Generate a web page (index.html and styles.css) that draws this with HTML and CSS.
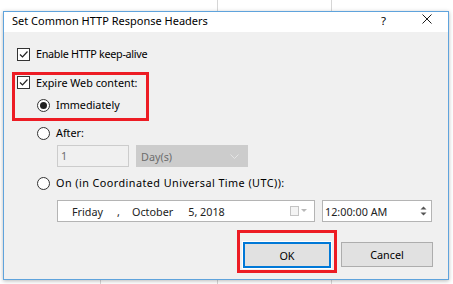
FILE: index.html
```html
<!DOCTYPE html>
<html>
<head>
<meta charset="utf-8">
<link rel="stylesheet" href="styles.css">
</head>
<body>
<div class="dialog">
  <div class="titlebar">
    <span class="title">Set Common HTTP Response Headers</span>
    <span class="help">?</span>
    <svg class="close" width="10" height="10" viewBox="0 0 10 10"><path d="M0.5 0.5 L9.5 9.5 M9.5 0.5 L0.5 9.5" stroke="#1a1a1a" stroke-width="1" fill="none"/></svg>
  </div>
  <div class="body">
    <div class="row">
      <span class="cb"><svg width="11" height="11" viewBox="0 0 11 11"><path d="M2 5.5 L4.5 8 L9.5 2.5" stroke="#222" stroke-width="1.2" fill="none"/></svg></span>
      <span class="label label-keep">Enable HTTP keep-alive</span>
    </div>
    <div class="highlight hl-expire">
      <div class="row row-expire">
        <span class="cb"><svg width="11" height="11" viewBox="0 0 11 11"><path d="M2 5.5 L4.5 8 L9.5 2.5" stroke="#222" stroke-width="1.2" fill="none"/></svg></span>
        <span class="label">Expire Web content:</span>
      </div>
      <div class="row radio-row row-imm">
        <span class="rb checked"><span class="dot"></span></span>
        <span class="label">Immediately</span>
      </div>
    </div>
    <div class="row radio-row row-after">
      <span class="rb"></span>
      <span class="label">After:</span>
    </div>
    <div class="after-inputs">
      <div class="textbox disabled">1</div>
      <div class="combo disabled">
        <span>Day(s)</span>
        <svg width="9" height="5" viewBox="0 0 9 5"><path d="M0.5 0.5 L4.5 4.5 L8.5 0.5" stroke="#e4e4e4" stroke-width="1" fill="none"/></svg>
      </div>
    </div>
    <div class="row radio-row row-on">
      <span class="rb"></span>
      <span class="label label-on">On (in Coordinated Universal Time (UTC)):</span>
    </div>
    <div class="date-row">
      <div class="datepicker">
        <span class="d-day">Friday</span>
        <span class="d-comma">,</span>
        <span class="d-month">October</span>
        <span class="d-num">5, 2018</span>
        <span class="cal"></span>
        <svg class="cal-arrow" width="6" height="4" viewBox="0 0 6 4"><path d="M0 0 L6 0 L3 3 Z" fill="#b8b8b8"/></svg>
      </div>
      <div class="timepicker">
        <span class="t-text">12:00:00 AM</span>
        <span class="spin">
          <svg width="7" height="4" viewBox="0 0 7 4"><path d="M0.5 3.5 L3.5 0.5 L6.5 3.5 Z" fill="#555"/></svg>
          <svg width="7" height="4" viewBox="0 0 7 4"><path d="M0.5 0.5 L3.5 3.5 L6.5 0.5 Z" fill="#555"/></svg>
        </span>
      </div>
    </div>
    <div class="buttons">
      <div class="highlight hl-ok">
        <div class="btn btn-ok">OK</div>
      </div>
      <div class="btn btn-cancel">Cancel</div>
    </div>
  </div>
</div>
</body>
</html>
```

FILE: styles.css
```css
html, body {
  margin: 0;
  padding: 0;
}
body {
  width: 453px;
  height: 284px;
  overflow: hidden;
  background-color: #ffffff;
  background-image:
    linear-gradient(#d6d6d6, #d6d6d6),
    linear-gradient(#d6d6d6, #d6d6d6),
    linear-gradient(#d6d6d6, #d6d6d6);
  background-size: 1px 284px, 1px 284px, 1px 4px;
  background-position: 217px 0, 331px 0, 100px 280px;
  background-repeat: no-repeat;
  font-family: "Noto Sans", "Open Sans", sans-serif;
  font-size: 10.8px;
  color: #000;
  padding-top: 11px;
  padding-left: 3px;
}
.dialog {
  width: 444px;
  height: 267px;
  border: 1px solid #5fa3dc;
  background: #f0f0f0;
  box-shadow: 0 1px 4px rgba(0,0,0,0.28);
  display: flex;
  flex-direction: column;
}
.titlebar {
  height: 20px;
  background: #ffffff;
  display: flex;
  align-items: flex-start;
}
.title {
  margin-left: 8px;
  line-height: 13px;
  margin-top: 2px;
  font-size: 11px;
}
.help {
  margin-left: auto;
  margin-top: 2px;
  line-height: 13px;
  font-size: 11.5px;
}
.close {
  margin-left: 36px;
  margin-right: 16px;
  margin-top: 2px;
}
.body {
  flex: 1;
  padding-left: 13px;
  padding-right: 15px;
  display: flex;
  flex-direction: column;
  align-items: flex-start;
}
.row {
  display: flex;
  align-items: center;
  height: 16px;
}
.body > .row:first-child {
  margin-top: 14px;
}
.label {
  margin-left: 6px;
  line-height: 14px;
  white-space: nowrap;
}
.label-keep {
  letter-spacing: -0.3px;
}
.label-on {
  letter-spacing: 0.45px;
}
.cb {
  width: 11px;
  height: 11px;
  border: 1px solid #333;
  background: #fff;
  display: flex;
}
.rb {
  width: 11px;
  height: 11px;
  border: 1px solid #333;
  border-radius: 50%;
  background: #fff;
  display: flex;
  align-items: center;
  justify-content: center;
}
.rb .dot {
  width: 7px;
  height: 7px;
  border-radius: 50%;
  background: #222;
}
.radio-row {
  margin-left: 20px;
}
.highlight {
  border: 3px solid #ed1c24;
}
.hl-expire {
  margin-top: 10px;
  margin-left: -5px;
  width: 129px;
  padding: 0 0 5px 2px;
}
.row-expire {
  height: 15px;
}
.row-imm {
  margin-top: 7px;
}
.row-after {
  margin-top: 4px;
}
.after-inputs {
  margin-top: 4px;
  margin-left: 40px;
  display: flex;
  gap: 7px;
  color: #6d6d6d;
}
.textbox {
  width: 67px;
  height: 20px;
  border: 1px solid #cccccc;
  background: #f0f0f0;
  padding-left: 3px;
  line-height: 20px;
}
.combo {
  height: 22px;
  background: #cccccc;
  padding: 0 9px 0 5px;
  display: flex;
  align-items: center;
  justify-content: space-between;
  width: 98px;
}
.row-on {
  margin-top: 8px;
}
.date-row {
  margin-top: 9px;
  margin-left: 40px;
  display: flex;
  gap: 7px;
}
.datepicker {
  width: 256px;
  height: 20px;
  border: 1px solid #b4b4b4;
  background: #fff;
  display: flex;
  align-items: center;
  color: #222;
}
.d-day { margin-left: 14px; }
.d-comma { margin-left: 14px; }
.d-month { margin-left: 12px; }
.d-num { margin-left: 15px; }
.cal {
  margin-left: auto;
  width: 7px;
  height: 8px;
  border: 1px solid #c4c4c4;
  background: #f4f4f4;
}
.cal-arrow {
  margin-left: 2px;
  margin-right: 7px;
}
.timepicker {
  width: 108px;
  height: 20px;
  border: 1px solid #b4b4b4;
  background: #fff;
  display: flex;
  align-items: center;
  color: #222;
}
.t-text {
  margin-left: 2px;
}
.spin {
  margin-left: auto;
  margin-right: 4px;
  display: flex;
  flex-direction: column;
  gap: 2px;
}
.buttons {
  margin-top: 8px;
  align-self: stretch;
  display: flex;
  justify-content: flex-end;
  align-items: flex-start;
  gap: 4px;
}
.hl-ok {
  width: 94px;
  height: 28px;
  padding-top: 9px;
  display: flex;
  justify-content: center;
}
.btn {
  height: 23px;
  border: 1px solid #adadad;
  background: #e1e1e1;
  display: flex;
  align-items: center;
  justify-content: center;
}
.btn-ok {
  width: 84px;
  height: 22px;
  border: 2px solid #0078d7;
  box-shadow: 0 0 0 1px #fff;
}
.btn-cancel {
  width: 90px;
  margin-top: 12px;
}
```
